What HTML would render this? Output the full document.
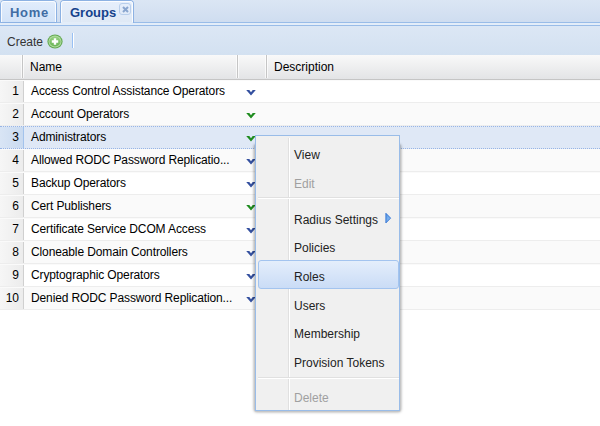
<!DOCTYPE html>
<html><head><meta charset="utf-8">
<style>
*{margin:0;padding:0;box-sizing:border-box}
html,body{width:600px;height:426px;overflow:hidden;background:#fff;font-family:"Liberation Sans",sans-serif;font-size:12px;color:#000;position:relative}
.a{position:absolute}
/* tab bar */
#tabbar{left:0;top:0;width:600px;height:22px;background:linear-gradient(#dbe6f4,#cfddf0)}
#strip{left:0;top:22px;width:600px;height:4px;border-top:1px solid #99bce8;border-bottom:1px solid #99bce8;background:#e3edf9}
.tab{border:1px solid #8db2e3;border-radius:4px 4px 0 0;font-weight:bold;white-space:nowrap}
.tab .in{position:absolute;left:0;top:0;right:0;bottom:0;border:1px solid rgba(255,255,255,.85);border-bottom:0;border-radius:3px 3px 0 0}
#home{left:0;top:0;width:57px;height:23px;background:linear-gradient(#e2edfc,#d2e3f8);color:#416da3}
#groups{left:60px;top:0;width:74px;height:23px;border-bottom:0;background:linear-gradient(#e6effc,#dfe9f5);color:#15428b}
#gfill{left:61px;top:22px;width:72px;height:3px;background:#e3edf9}
.tab .t{position:absolute;top:5px;line-height:14px}
#close{left:119px;top:3px;width:12px;height:12px;border:1px solid #b9cfec;border-radius:3px}
/* toolbar */
#tbar{left:0;top:26px;width:600px;height:29px;background:linear-gradient(#dce7f5,#d3e1f1)}
#create{left:7px;top:35px;line-height:14px;color:#333}
#sep{left:72px;top:33px;width:2px;height:15px;border-left:1px solid #98c0f4;background:#fff}
/* header */
#hdr{left:0;top:55px;width:600px;height:25px;background:linear-gradient(#f9f9f9,#e3e4e6);border-bottom:1px solid #c5c5c5}
.hdiv{top:55px;width:1px;height:23px;background:#c5c5c5}
.hl{top:55px;width:1px;height:23px;background:rgba(255,255,255,.7)}
.ht{top:60px;line-height:14px;color:#000}
/* rows */
.row{left:0;width:600px;height:23px;border-top:1px solid #fafafa;border-bottom:1px solid #ededed;background:#fff}
.row.alt{background:#fafafa}
.row.sel{background:#dfe8f6;border-top:1px dotted #98b5e6;border-bottom:1px dotted #98b5e6}
.num{left:0;top:0;width:24px;height:21px;border-right:1px solid #d0d0d0;background:linear-gradient(90deg,#f6f6f6,#ececec)}
.sel .num{border-right-color:#a3c3ec;background:linear-gradient(90deg,#d9e5f5,#c9daf0)}
.nt{right:4px;top:3px;line-height:14px;text-align:right}
.ct{left:31px;top:3px;line-height:14px;white-space:nowrap;letter-spacing:-0.12px}
.chev{left:246px;top:8px}
/* menu */
#shadow{left:254px;top:144px;width:147px;height:268px;box-shadow:0 0 3px 0 rgba(0,0,0,.4);border-radius:3px;background:rgba(0,0,0,.22)}
#menu{left:255px;top:135px;width:145px;height:276px;background:#f0f0f0;border:1px solid #99bce8}
.vsep{left:32px;width:2px;border-left:1px solid #e0e0e0;background:#fff}
.hsep{left:2px;width:141px;height:2px;border-top:1px solid #e0e0e0;background:#fff}
.mi{left:38px;line-height:14px;color:#222;white-space:nowrap}
.mi.dis{color:#a0a0a0}
#active{left:2px;top:124px;width:141px;height:29px;border:1px solid #a3c4ef;border-radius:3px;background:linear-gradient(#e4eefb,#cadcf6)}
</style></head><body>
<div class="a" id="tabbar"></div>
<div class="a" id="strip"></div>
<div class="a tab" id="home"><div class="in"></div><span class="t" style="left:9px;font-size:13px;letter-spacing:0.7px">Home</span></div>
<div class="a tab" id="groups"><div class="in"></div><span class="t" style="left:9px;font-size:13px">Groups</span></div>
<div class="a" id="gfill"></div>
<div class="a" id="close"><svg width="10" height="10" style="position:absolute;left:0;top:0"><path d="M3 3L8 8M8 3L3 8" stroke="#8aa6cf" stroke-width="2"/></svg></div>
<div class="a" id="tbar"></div>
<div class="a" id="create">Create</div>
<svg class="a" style="left:47px;top:34px" width="16" height="15" viewBox="0 0 16 15">
<defs><linearGradient id="g1" x1="0" y1="0" x2="0" y2="1"><stop offset="0" stop-color="#98d284"/><stop offset="1" stop-color="#6ab457"/></linearGradient></defs>
<ellipse cx="8" cy="7.5" rx="7.6" ry="7.1" fill="#62a950"/>
<ellipse cx="8" cy="7.5" rx="6.5" ry="6" fill="#b4dca4"/>
<ellipse cx="8" cy="7.5" rx="5.6" ry="5.1" fill="url(#g1)"/>
<path d="M8 4.3V10.7M4.8 7.5H11.2" stroke="#fff" stroke-width="2.4"/>
</svg>
<div class="a" id="sep"></div>
<div class="a" id="hdr"></div>
<div class="a hl" style="left:21px"></div><div class="a hdiv" style="left:22px"></div><div class="a hl" style="left:23px"></div>
<div class="a hl" style="left:236px"></div><div class="a hdiv" style="left:237px"></div><div class="a hl" style="left:238px"></div>
<div class="a hl" style="left:265px"></div><div class="a hdiv" style="left:266px"></div><div class="a hl" style="left:267px"></div>
<div class="a ht" style="left:30px">Name</div>
<div class="a ht" style="left:274px">Description</div>
<div id="rows">
<div class="a row" style="top:80px"><div class="a num"><span class="a nt">1</span></div><span class="a ct">Access Control Assistance Operators</span><svg class="a chev" width="10" height="7" viewBox="0 0 10 7"><path d="M0.2 1L3.3 1L5 3.2L6.7 1L9.8 1L5 6.4Z" fill="#34509f"/></svg></div>
<div class="a row alt" style="top:103px"><div class="a num"><span class="a nt">2</span></div><span class="a ct">Account Operators</span><svg class="a chev" width="10" height="7" viewBox="0 0 10 7"><path d="M0.2 1L3.3 1L5 3.2L6.7 1L9.8 1L5 6.4Z" fill="#1f8c1f"/></svg></div>
<div class="a row sel" style="top:126px"><div class="a num"><span class="a nt">3</span></div><span class="a ct">Administrators</span><svg class="a chev" width="10" height="7" viewBox="0 0 10 7"><path d="M0.2 1L3.3 1L5 3.2L6.7 1L9.8 1L5 6.4Z" fill="#1f8c1f"/></svg></div>
<div class="a row alt" style="top:149px"><div class="a num"><span class="a nt">4</span></div><span class="a ct">Allowed RODC Password Replicatio...</span><svg class="a chev" width="10" height="7" viewBox="0 0 10 7"><path d="M0.2 1L3.3 1L5 3.2L6.7 1L9.8 1L5 6.4Z" fill="#34509f"/></svg></div>
<div class="a row" style="top:172px"><div class="a num"><span class="a nt">5</span></div><span class="a ct">Backup Operators</span><svg class="a chev" width="10" height="7" viewBox="0 0 10 7"><path d="M0.2 1L3.3 1L5 3.2L6.7 1L9.8 1L5 6.4Z" fill="#34509f"/></svg></div>
<div class="a row alt" style="top:195px"><div class="a num"><span class="a nt">6</span></div><span class="a ct">Cert Publishers</span><svg class="a chev" width="10" height="7" viewBox="0 0 10 7"><path d="M0.2 1L3.3 1L5 3.2L6.7 1L9.8 1L5 6.4Z" fill="#1f8c1f"/></svg></div>
<div class="a row" style="top:218px"><div class="a num"><span class="a nt">7</span></div><span class="a ct">Certificate Service DCOM Access</span><svg class="a chev" width="10" height="7" viewBox="0 0 10 7"><path d="M0.2 1L3.3 1L5 3.2L6.7 1L9.8 1L5 6.4Z" fill="#34509f"/></svg></div>
<div class="a row alt" style="top:241px"><div class="a num"><span class="a nt">8</span></div><span class="a ct">Cloneable Domain Controllers</span><svg class="a chev" width="10" height="7" viewBox="0 0 10 7"><path d="M0.2 1L3.3 1L5 3.2L6.7 1L9.8 1L5 6.4Z" fill="#34509f"/></svg></div>
<div class="a row" style="top:264px"><div class="a num"><span class="a nt">9</span></div><span class="a ct">Cryptographic Operators</span><svg class="a chev" width="10" height="7" viewBox="0 0 10 7"><path d="M0.2 1L3.3 1L5 3.2L6.7 1L9.8 1L5 6.4Z" fill="#34509f"/></svg></div>
<div class="a row alt" style="top:287px"><div class="a num"><span class="a nt">10</span></div><span class="a ct">Denied RODC Password Replication...</span><svg class="a chev" width="10" height="7" viewBox="0 0 10 7"><path d="M0.2 1L3.3 1L5 3.2L6.7 1L9.8 1L5 6.4Z" fill="#34509f"/></svg></div>
</div>
<div class="a" id="shadow"></div>
<div class="a" id="menu">
<div class="a vsep" style="top:2px;height:59px"></div>
<div class="a hsep" style="top:61px"></div>
<div class="a vsep" style="top:63px;height:178px"></div>
<div class="a hsep" style="top:241px"></div>
<div class="a vsep" style="top:243px;height:31px"></div>
<div class="a" id="active"></div>
<span class="a mi" style="top:12px">View</span>
<span class="a mi dis" style="top:41px">Edit</span>
<span class="a mi" style="top:77px">Radius Settings</span>
<span class="a mi" style="top:105px">Policies</span>
<span class="a mi" style="top:134px">Roles</span>
<span class="a mi" style="top:163px">Users</span>
<span class="a mi" style="top:191px">Membership</span>
<span class="a mi" style="top:220px">Provision Tokens</span>
<span class="a mi dis" style="top:255px">Delete</span>
<svg class="a" style="left:129px;top:76px" width="8" height="12" viewBox="0 0 8 12"><defs><linearGradient id="g2" x1="0" y1="0" x2="1" y2="1"><stop offset="0" stop-color="#5b9be6"/><stop offset="1" stop-color="#8ec0f2"/></linearGradient></defs><path d="M0.9 1.3L5.6 6.1L0.9 10.9Z" fill="url(#g2)" stroke="#2f70d2" stroke-width="0.9" stroke-linejoin="round"/></svg>
</div>
</body></html>
